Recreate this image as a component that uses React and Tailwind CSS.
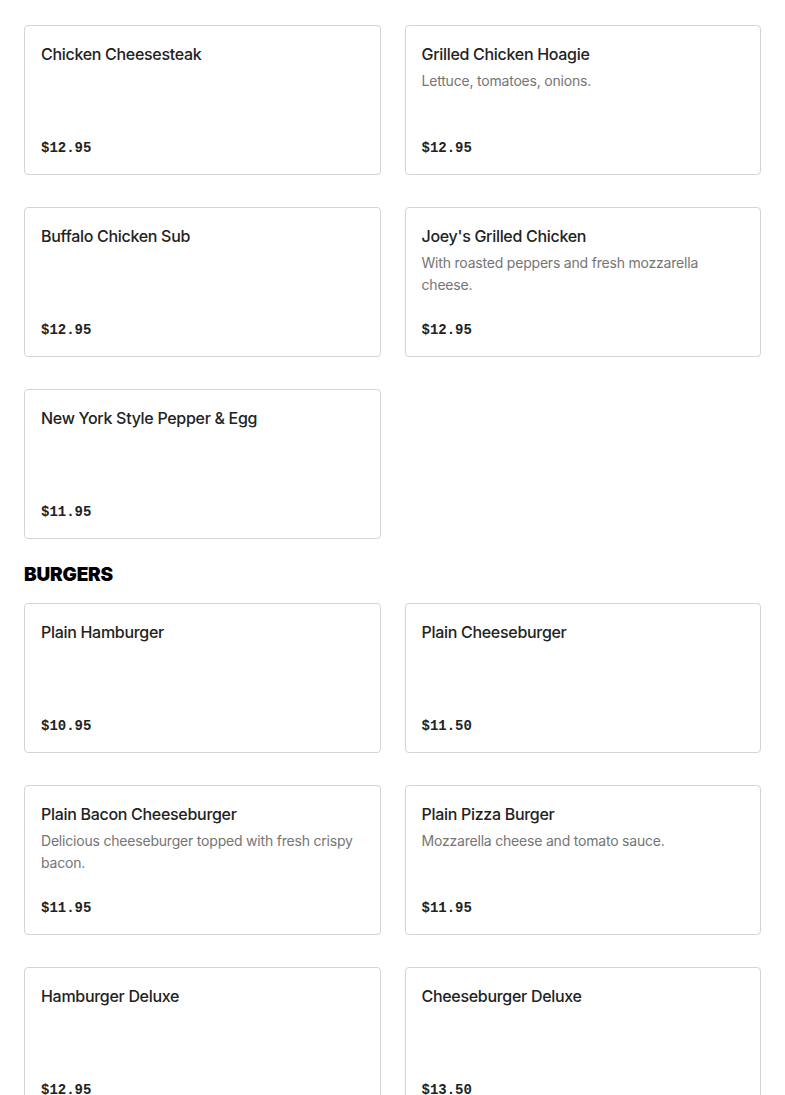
import React from "react";

const sections = [
  {
    title: null,
    items: [
      { name: "Chicken Cheesesteak", price: "$12.95" },
      { name: "Grilled Chicken Hoagie", desc: "Lettuce, tomatoes, onions.", price: "$12.95" },
      { name: "Buffalo Chicken Sub", price: "$12.95" },
      { name: "Joey's Grilled Chicken", desc: "With roasted peppers and fresh mozzarella cheese.", price: "$12.95" },
      { name: "New York Style Pepper & Egg", price: "$11.95" },
    ],
  },
  {
    title: "BURGERS",
    items: [
      { name: "Plain Hamburger", price: "$10.95" },
      { name: "Plain Cheeseburger", price: "$11.50" },
      { name: "Plain Bacon Cheeseburger", desc: "Delicious cheeseburger topped with fresh crispy bacon.", price: "$11.95" },
      { name: "Plain Pizza Burger", desc: "Mozzarella cheese and tomato sauce.", price: "$11.95" },
      { name: "Hamburger Deluxe", price: "$12.95" },
      { name: "Cheeseburger Deluxe", price: "$13.50" },
    ],
  },
];

function Card({ item }) {
  return (
    <div className="h-[150px] rounded-[4px] border border-[#d4d4d4] bg-white px-4 pt-4 pb-4 flex flex-col justify-between">
      <div>
        <div className="text-[16px] leading-[24px] font-medium tracking-[-0.3px] text-[#222]">{item.name}</div>
        {item.desc && (
          <div className="mt-[4px] text-[14px] leading-[22px] tracking-[-0.2px] text-[#757575]">{item.desc}</div>
        )}
      </div>
      <div className="text-[14px] leading-[20px] font-bold text-[#222]" style={{ fontFamily: '"Liberation Mono", monospace' }}>
        {item.price}
      </div>
    </div>
  );
}

export default function App() {
  return (
    <div className="bg-white px-6 pt-[25px] pb-10" style={{ fontFamily: 'Inter, "Noto Sans", sans-serif' }}>
      {sections.map((s, i) => (
        <div key={i}>
          {s.title && (
            <h2 className="mt-[22px] mb-[14px] text-[19px] leading-[28px] font-black tracking-[-0.2px] text-black">{s.title}</h2>
          )}
          <div className="grid grid-cols-2 gap-x-6 gap-y-8">
            {s.items.map((it) => (
              <Card key={it.name} item={it} />
            ))}
          </div>
        </div>
      ))}
    </div>
  );
}
